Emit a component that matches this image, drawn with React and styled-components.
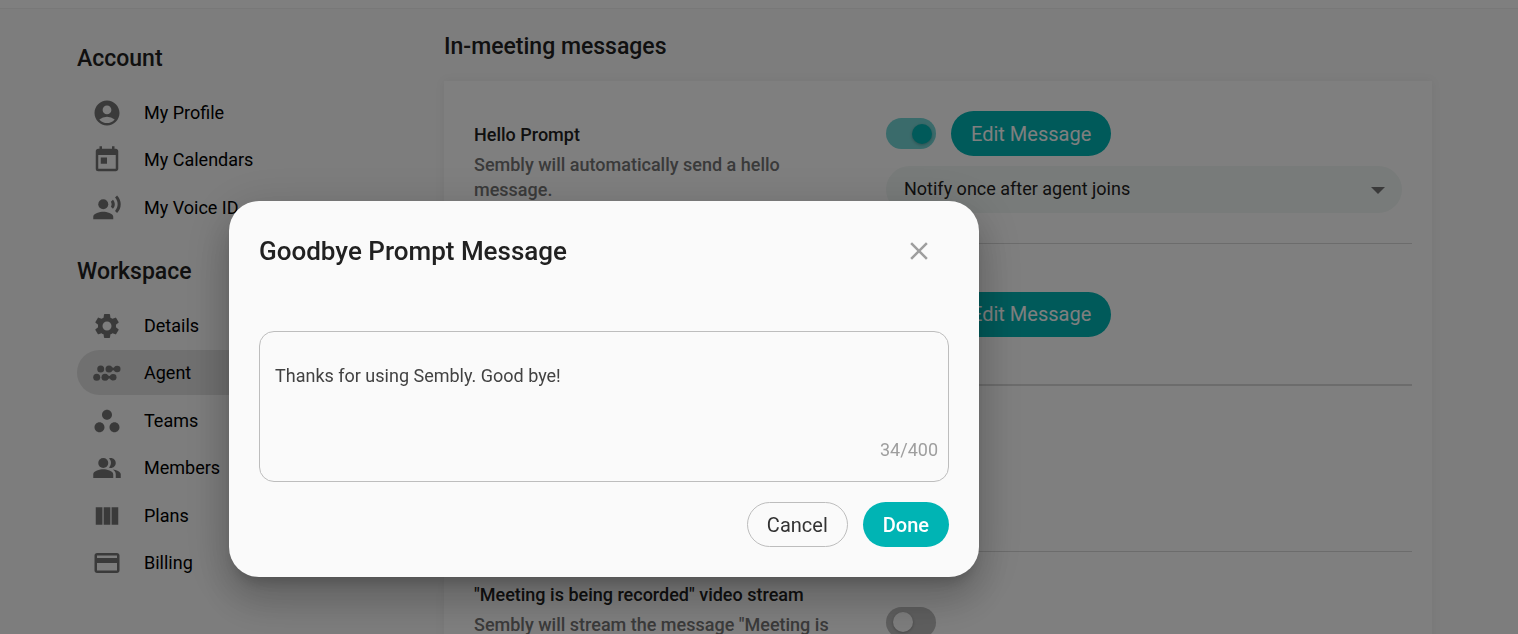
import React, { useState } from 'react'
import styled, { createGlobalStyle } from 'styled-components'
import {
  MdAccountCircle,
  MdToday,
  MdRecordVoiceOver,
  MdSettings,
  MdWorkspaces,
  MdPeopleAlt,
  MdViewColumn,
  MdCreditCard,
  MdClose,
} from 'react-icons/md'

const GlobalStyle = createGlobalStyle`
  * { box-sizing: border-box; }
  body {
    margin: 0;
    background: #fafafa;
    color: #212121;
    font-family: Roboto, sans-serif;
    font-size: 18px;
  }
  button, select, textarea { font-family: inherit; }
`

const Page = styled.div`
  height: 100vh;
  overflow: hidden;
`
const TopBar = styled.header`
  height: 9px;
  background: #ffffff;
  border-bottom: 1px solid #f0f0f0;
`
const Layout = styled.div`
  display: grid;
  grid-template-columns: 337px 1fr;
  gap: 30px;
  padding: 20px 86px 0 77px;
`
const Sidebar = styled.nav`
  padding-top: 15px;
`
const GroupTitle = styled.h2`
  margin: 0 0 15px;
  font-size: 23px;
  font-weight: 500;
  line-height: 30px;
`
const NavList = styled.ul`
  display: flex;
  flex-direction: column;
  gap: 2px;
  margin: 0 0 27px;
  padding: 0;
  list-style: none;

  li:nth-child(odd) {
    padding-top: 1px;
  }
`
const NavLink = styled.a`
  display: flex;
  align-items: center;
  gap: 22px;
  height: 45px;
  padding: 0 15px;
  border-radius: 23px;
  background: ${({ $active }) => ($active ? '#e0e0e0' : 'transparent')};
  color: #000000;
  text-decoration: none;

  svg {
    width: 30px;
    height: 30px;
    color: #757575;
  }
`
const PageTitle = styled.h1`
  margin: 3px 0 19px;
  font-size: 23px;
  font-weight: 500;
  line-height: 30px;
`
const Card = styled.section`
  padding: 0 20px 0 30px;
  background: #ffffff;
  box-shadow: 0 0 10px rgba(0, 0, 0, 0.06);
`
const SettingRow = styled.div`
  display: grid;
  grid-template-columns: 372px 1fr;
  gap: 40px;
  align-items: center;
  min-height: ${({ $tall }) => ($tall ? '166px' : 'auto')};
  padding: 30px 0;
  border-bottom: ${({ $thick }) => ($thick ? '2px' : '1px')} solid #d8d8d8;
`
const SettingText = styled.label`
  display: flex;
  flex-direction: column;
  gap: 5px;
  font-weight: 500;
  line-height: 25px;
`
const Description = styled.span`
  color: #757575;
`
const Controls = styled.div`
  display: flex;
  flex-direction: column;
  gap: 10px;
  padding-right: 10px;
`
const ControlLine = styled.div`
  display: flex;
  align-items: center;
  gap: 15px;
`
const Switch = styled.input`
  appearance: none;
  display: flex;
  align-items: center;
  justify-content: ${({ checked }) => (checked ? 'flex-end' : 'flex-start')};
  width: 50px;
  height: 31px;
  margin: 0;
  padding: 0 4px 0 7px;
  border-radius: 16px;
  background: ${({ checked }) => (checked ? '#75d6d6' : '#bdbdbd')};

  &::before {
    content: '';
    width: 20px;
    height: 20px;
    border-radius: 50%;
    background: ${({ checked }) => (checked ? '#00b4b4' : '#fafafa')};
    box-shadow: 0 1px 3px rgba(0, 0, 0, 0.25);
  }
`
const Button = styled.button`
  height: 45px;
  padding: ${({ $outlined }) => ($outlined ? '0 19px' : '0 20px')};
  border: ${({ $outlined }) => ($outlined ? '1px solid #bdbdbd' : 'none')};
  border-radius: 23px;
  background: ${({ $outlined }) => ($outlined ? 'transparent' : '#00b4b4')};
  color: ${({ $outlined }) => ($outlined ? '#333333' : '#ffffff')};
  font-size: 20px;
  font-weight: ${({ $strong }) => ($strong ? 500 : 400)};
`
const SelectWrapper = styled.div`
  position: relative;

  svg {
    position: absolute;
    top: 21px;
    right: 17px;
    pointer-events: none;
  }
`
const Select = styled.select`
  appearance: none;
  display: block;
  width: 100%;
  height: 47px;
  padding: 0 40px 2px 18px;
  border: none;
  border-radius: 24px;
  background: #f1f6f4;
  color: #212121;
  font-size: 18px;
`
const Overlay = styled.div`
  position: fixed;
  inset: 0;
  display: flex;
  align-items: flex-start;
  padding: 201px 20px 0 229px;
  background: rgba(0, 0, 0, 0.5);
`
const Dialog = styled.div`
  width: 750px;
  padding: 30px;
  border-radius: 30px;
  background: #fafafa;
  box-shadow: 0 11px 15px -7px rgba(0, 0, 0, 0.2),
    0 24px 38px 3px rgba(0, 0, 0, 0.14),
    0 9px 46px 8px rgba(0, 0, 0, 0.12);
`
const DialogHeader = styled.div`
  display: flex;
  align-items: center;
  justify-content: space-between;
  height: 40px;
  margin-bottom: 60px;
  padding-right: 15px;
`
const DialogTitle = styled.h2`
  margin: 0;
  font-size: 26px;
  font-weight: 500;
`
const CloseButton = styled.button`
  display: flex;
  padding: 0;
  border: none;
  background: none;
  color: #9e9e9e;
`
const MessageField = styled.div`
  display: flex;
  flex-direction: column;
  height: 151px;
  padding: 31px 10px 18px 15px;
  border: 1px solid #bdbdbd;
  border-radius: 15px;
`
const MessageInput = styled.textarea`
  flex: 1;
  padding: 0;
  border: none;
  outline: none;
  resize: none;
  background: none;
  color: #424242;
  font-size: 18px;
  line-height: 26px;
`
const Counter = styled.span`
  align-self: flex-end;
  color: #9e9e9e;
  line-height: 26px;
`
const DialogActions = styled.div`
  display: flex;
  justify-content: flex-end;
  gap: 15px;
  margin-top: 20px;
`

const AgentIcon = () => (
  <svg viewBox="0 0 30 30" fill="currentColor">
    <circle cx="8.7" cy="11" r="3.5" />
    <circle cx="17" cy="11" r="3.5" />
    <circle cx="25.2" cy="11" r="3.3" />
    <path d="M18 7.8 Q21.3 11.8 24.6 7.8 V14.2 Q21.3 10.2 18 14.2 Z" />
    <circle cx="4.7" cy="19.2" r="3.5" />
    <circle cx="13" cy="19.2" r="3.5" />
    <circle cx="21.2" cy="19.2" r="3.3" />
    <path d="M14 16 Q17.3 20 20.6 16 V22.4 Q17.3 18.4 14 22.4 Z" />
  </svg>
)

const groups = [
  {
    title: 'Account',
    items: [
      { name: 'My Profile', Icon: MdAccountCircle },
      { name: 'My Calendars', Icon: MdToday },
      { name: 'My Voice ID', Icon: MdRecordVoiceOver },
    ],
  },
  {
    title: 'Workspace',
    items: [
      { name: 'Details', Icon: MdSettings },
      { name: 'Agent', Icon: AgentIcon, active: true },
      { name: 'Teams', Icon: MdWorkspaces },
      { name: 'Members', Icon: MdPeopleAlt },
      { name: 'Plans', Icon: MdViewColumn },
      { name: 'Billing', Icon: MdCreditCard },
    ],
  },
]

const Toggle = ({ id, defaultOn }) => {
  const [on, setOn] = useState(defaultOn)
  return <Switch id={id} type="checkbox" checked={on} onChange={() => setOn(!on)} />
}

const SettingLabel = ({ id, title, children }) => (
  <SettingText htmlFor={id}>
    {title}
    <Description>{children}</Description>
  </SettingText>
)

const GoodbyeDialog = () => {
  const [message, setMessage] = useState('Thanks for using Sembly. Good bye!')
  return (
    <Overlay>
      <Dialog role="dialog" aria-labelledby="dialog-title">
        <DialogHeader>
          <DialogTitle id="dialog-title">Goodbye Prompt Message</DialogTitle>
          <CloseButton aria-label="Close"><MdClose size={30} /></CloseButton>
        </DialogHeader>
        <MessageField>
          <MessageInput
            aria-labelledby="dialog-title"
            maxLength={400}
            value={message}
            onChange={(e) => setMessage(e.target.value)}
          />
          <Counter>{message.length}/400</Counter>
        </MessageField>
        <DialogActions>
          <Button $outlined>Cancel</Button>
          <Button $strong>Done</Button>
        </DialogActions>
      </Dialog>
    </Overlay>
  )
}

const App = () => (
  <>
    <GlobalStyle />
    <Page>
      <TopBar />
      <Layout>
        <Sidebar>
          {groups.map(({ title, items }) => (
            <React.Fragment key={title}>
              <GroupTitle>{title}</GroupTitle>
              <NavList>
                {items.map(({ name, Icon, active }) => (
                  <li key={name}>
                    <NavLink href="#" $active={active}><Icon />{name}</NavLink>
                  </li>
                ))}
              </NavList>
            </React.Fragment>
          ))}
        </Sidebar>
        <main>
          <PageTitle>In-meeting messages</PageTitle>
          <Card>
            <SettingRow>
              <SettingLabel id="hello" title="Hello Prompt">
                Sembly will automatically send a hello message.
              </SettingLabel>
              <Controls>
                <ControlLine>
                  <Toggle id="hello" defaultOn />
                  <Button>Edit Message</Button>
                </ControlLine>
                <SelectWrapper>
                  <Select aria-label="Hello prompt frequency">
                    <option>Notify once after agent joins</option>
                  </Select>
                  <svg width="14" height="7" viewBox="0 0 14 7" fill="#757575">
                    <path d="M0 0 H14 L7 7 Z" />
                  </svg>
                </SelectWrapper>
              </Controls>
            </SettingRow>
            <SettingRow $thick>
              <SettingLabel id="goodbye" title="Goodbye Prompt">
                Sembly will automatically send a goodbye message.
              </SettingLabel>
              <Controls>
                <ControlLine>
                  <Toggle id="goodbye" defaultOn />
                  <Button>Edit Message</Button>
                </ControlLine>
              </Controls>
            </SettingRow>
            <SettingRow $tall />
            <SettingRow>
              <SettingLabel id="recorded" title={'"Meeting is being recorded" video stream'}>
                Sembly will stream the message "Meeting is being recorded"
              </SettingLabel>
              <Controls>
                <Toggle id="recorded" defaultOn={false} />
              </Controls>
            </SettingRow>
          </Card>
        </main>
      </Layout>
    </Page>
    <GoodbyeDialog />
  </>
)

export default App
